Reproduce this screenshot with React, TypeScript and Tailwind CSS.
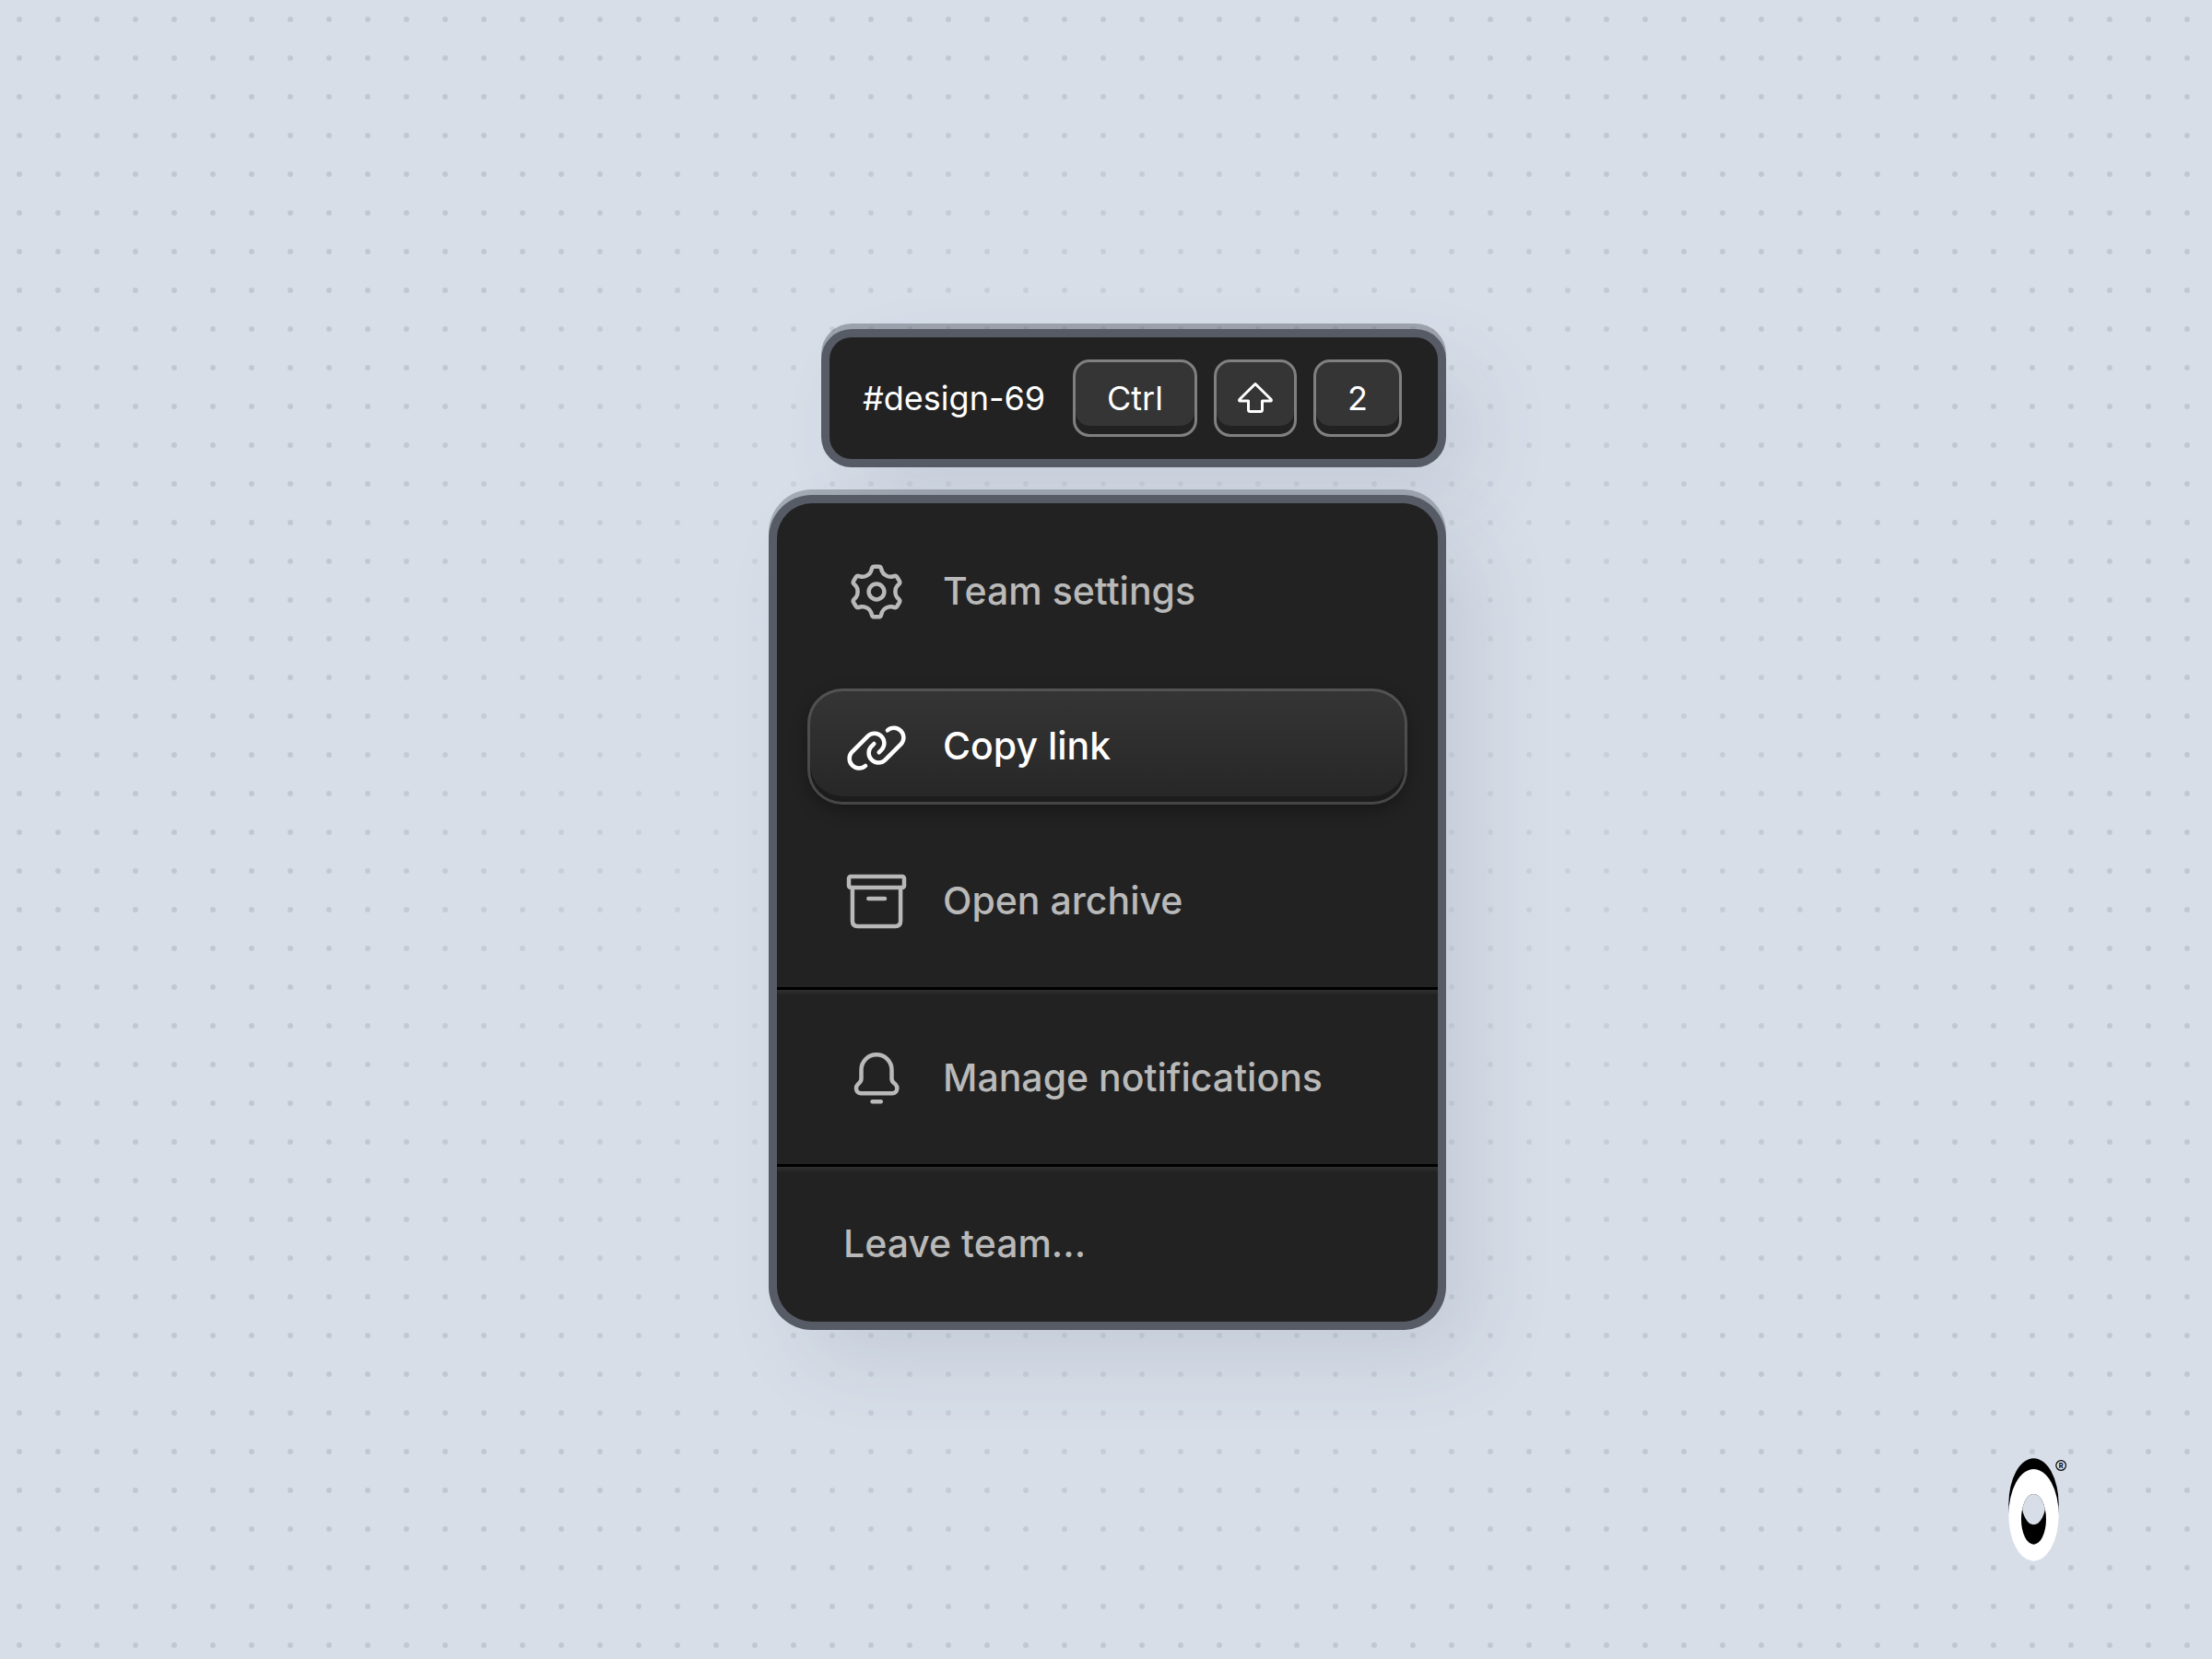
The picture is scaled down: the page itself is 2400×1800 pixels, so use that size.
import React from 'react';

const items = [
  { label: 'Team settings', icon: 'gear' },
  { label: 'Copy link', icon: 'link', active: true },
  { label: 'Open archive', icon: 'archive' },
];

const Icon = ({ name }: { name: string }) => (
  <svg
    viewBox="0 0 24 24"
    className="size-18 shrink-0"
    fill="none"
    stroke="currentColor"
    strokeWidth="1.5"
    strokeLinecap="round"
    strokeLinejoin="round"
    aria-hidden="true"
  >
    {name === 'gear' && (
      <>
        <circle cx="12" cy="12" r="2.8" />
        <path d="M12.8 2.9Q13.45 2.9 13.65 3.5L14 4.6Q14.27 5.46 15.4 6.11Q16.53 6.76 17.41 6.57L18.54 6.32Q19.16 6.19 19.48 6.76L20.28 8.14Q20.61 8.71 20.19 9.18L19.41 10.03Q18.8 10.7 18.8 12Q18.8 13.3 19.41 13.97L20.19 14.82Q20.61 15.29 20.28 15.86L19.48 17.24Q19.16 17.81 18.54 17.68L17.41 17.43Q16.53 17.24 15.4 17.89Q14.27 18.54 14 19.4L13.65 20.5Q13.45 21.1 12.8 21.1H11.2Q10.55 21.1 10.35 20.5L10 19.4Q9.73 18.54 8.6 17.89Q7.47 17.24 6.59 17.43L5.46 17.68Q4.84 17.81 4.52 17.24L3.72 15.86Q3.39 15.29 3.81 14.82L4.59 13.97Q5.2 13.3 5.2 12Q5.2 10.7 4.59 10.03L3.81 9.18Q3.39 8.71 3.72 8.14L4.52 6.76Q4.84 6.19 5.46 6.32L6.59 6.57Q7.47 6.76 8.6 6.11Q9.73 5.46 10 4.6L10.35 3.5Q10.55 2.9 11.2 2.9Z" />
      </>
    )}
    {name === 'link' && (
      <>
        <path d="M8.02 18.97A3.5 3.5 0 0 1 3.08 14.03L8.98 8.13A3.5 3.5 0 0 1 13.92 13.07L12.9 14.1" />
        <path d="M15.98 6.13A3.5 3.5 0 0 1 20.92 11.07L15.02 16.97A3.5 3.5 0 0 1 10.08 12.03L11.1 11" />
      </>
    )}
    {name === 'archive' && (
      <>
        <rect x="2" y="3" width="20" height="4" rx="0.7" />
        <path d="M3.3 7V19.1Q3.3 21 5.2 21H18.8Q20.7 21 20.7 19.1V7M9.1 11H15" />
      </>
    )}
    {name === 'bell' && (
      <path d="M12 3.45A5.5 5.5 0 0 0 6.5 8.95V12C6.5 12.7 6.3 13.2 5.8 13.6L5.3 14.1C4.8 14.6 4.65 15 4.65 15.6C4.65 16.6 5.4 17.4 6.4 17.4H17.7C18.7 17.4 19.45 16.6 19.45 15.6C19.45 15 19.3 14.6 18.8 14.1L18.2 13.6C17.7 13.2 17.5 12.7 17.5 12V8.95A5.5 5.5 0 0 0 12 3.45ZM10.5 20.45H13.6" />
    )}
  </svg>
);

const MenuItem = ({ label, icon, active }: { label: string; icon?: string; active?: boolean }) => (
  <button
    type="button"
    role="menuitem"
    className={
      active
        ? 'flex h-[126px] w-full items-center gap-9 rounded-[38px] border-3 border-white/15 bg-linear-to-b from-[#353535] to-[#262626] bg-origin-border px-9 text-left text-white shadow-[inset_0_-6px_0_#1c1c1c,0_6px_18px_rgba(0,0,0,0.3)]'
        : 'flex h-[126px] w-full items-center gap-9 rounded-[38px] border-3 border-transparent px-9 text-left'
    }
  >
    {icon && <Icon name={icon} />}
    <span>{label}</span>
  </button>
);

const Divider = () => (
  <div role="separator">
    <div className="h-[3px] bg-black" />
    <div className="-mb-1.5 h-1.5 bg-linear-to-b from-[#303030] to-[#222222]" />
  </div>
);

const Key = ({ children, className }: { children: React.ReactNode; className: string }) => (
  <kbd
    className={`flex h-[84px] items-center justify-center rounded-[18px] border-3 border-[#808080] bg-[#353535] font-['Inter',sans-serif] shadow-[inset_0_-9px_0_#222222] ${className}`}
  >
    {children}
  </kbd>
);

const Logo = () => (
  <svg
    viewBox="114 63 198 342"
    className="row-start-3 mr-[156px] mb-[105px] w-[66px] self-end justify-self-end"
    role="img"
    aria-label="Logo"
  >
    <ellipse cx="199.5" cy="216" rx="81.5" ry="149.5" fill="#000" />
    <ellipse cx="199.5" cy="251.5" rx="81.5" ry="149.5" fill="#fff" />
    <clipPath id="hole">
      <ellipse cx="199.5" cy="265" rx="40.5" ry="82" />
    </clipPath>
    <g clipPath="url(#hole)">
      <rect x="150" y="180" width="100" height="170" fill="#000" />
      <ellipse cx="199.5" cy="201" rx="40.5" ry="82" fill="#d7dee8" />
    </g>
    <circle cx="288.5" cy="90" r="16" fill="none" stroke="#000" strokeWidth="3.5" />
    <text x="288.5" y="98" textAnchor="middle" fontSize="22" fontWeight="700" fontFamily="Inter, sans-serif">
      R
    </text>
  </svg>
);

const App = () => {
  return (
    <div className="grid min-h-screen grid-rows-[1fr_auto_1fr] bg-[#d7dee8] bg-[radial-gradient(circle_at_center,rgba(215,222,232,0.6)_20%,rgba(215,222,232,0)_60%),radial-gradient(circle_at_center,#bcc3ce,#c6cdd7_3px,transparent_3px)] bg-size-[100%_100%,42px_42px] font-['Inter',sans-serif]">
      <main className="row-start-2 flex flex-col items-center pl-[3px]">
        <div className="flex w-[717px] flex-col items-end gap-12">
          {/* Shortcut hint */}
          <div className="flex items-center rounded-3xl bg-[#222222] py-6 pr-[39px] pl-9 text-4xl text-white shadow-[0_0_0_9px_#565b66,0_-6px_0_9px_rgba(33,38,48,0.32),36px_36px_90px_rgba(70,85,105,0.12)]">
            <span className="w-[228px]">#design-69</span>
            <div className="flex gap-[18px]">
              <Key className="w-[135px]">Ctrl</Key>
              <Key className="w-[90px]">
                <svg viewBox="0 0 48 48" className="size-12" fill="none" stroke="currentColor" strokeWidth="3" strokeLinejoin="round" role="img" aria-label="Shift">
                  <path d="M24 8.5L7 25.2Q6 27 7.5 27H16.5V36.5Q16.5 38.5 18.5 38.5H29.5Q31.5 38.5 31.5 36.5V27H40.5Q42 27 41 25.2Z" />
                </svg>
              </Key>
              <Key className="w-24">2</Key>
            </div>
          </div>

          {/* Menu */}
          <div
            role="menu"
            className="w-full rounded-[38px] bg-[#222222] text-[41px] font-medium text-[#b9b9b9] shadow-[0_0_0_9px_#565b66,0_-6px_0_9px_rgba(33,38,48,0.28),36px_36px_90px_rgba(70,85,105,0.14)]"
          >
            <div className="flex flex-col gap-[42px] px-[33px] pt-[33px] pb-[30px]">
              {items.map((item) => (
                <MenuItem key={item.label} {...item} />
              ))}
            </div>
            <Divider />
            <div className="px-[33px] pt-[33px] pb-[30px]">
              <MenuItem label="Manage notifications" icon="bell" />
            </div>
            <Divider />
            <div className="px-[33px] py-[21px]">
              <MenuItem label="Leave team..." />
            </div>
          </div>
        </div>
      </main>
      <Logo />
    </div>
  );
};

export default App;
